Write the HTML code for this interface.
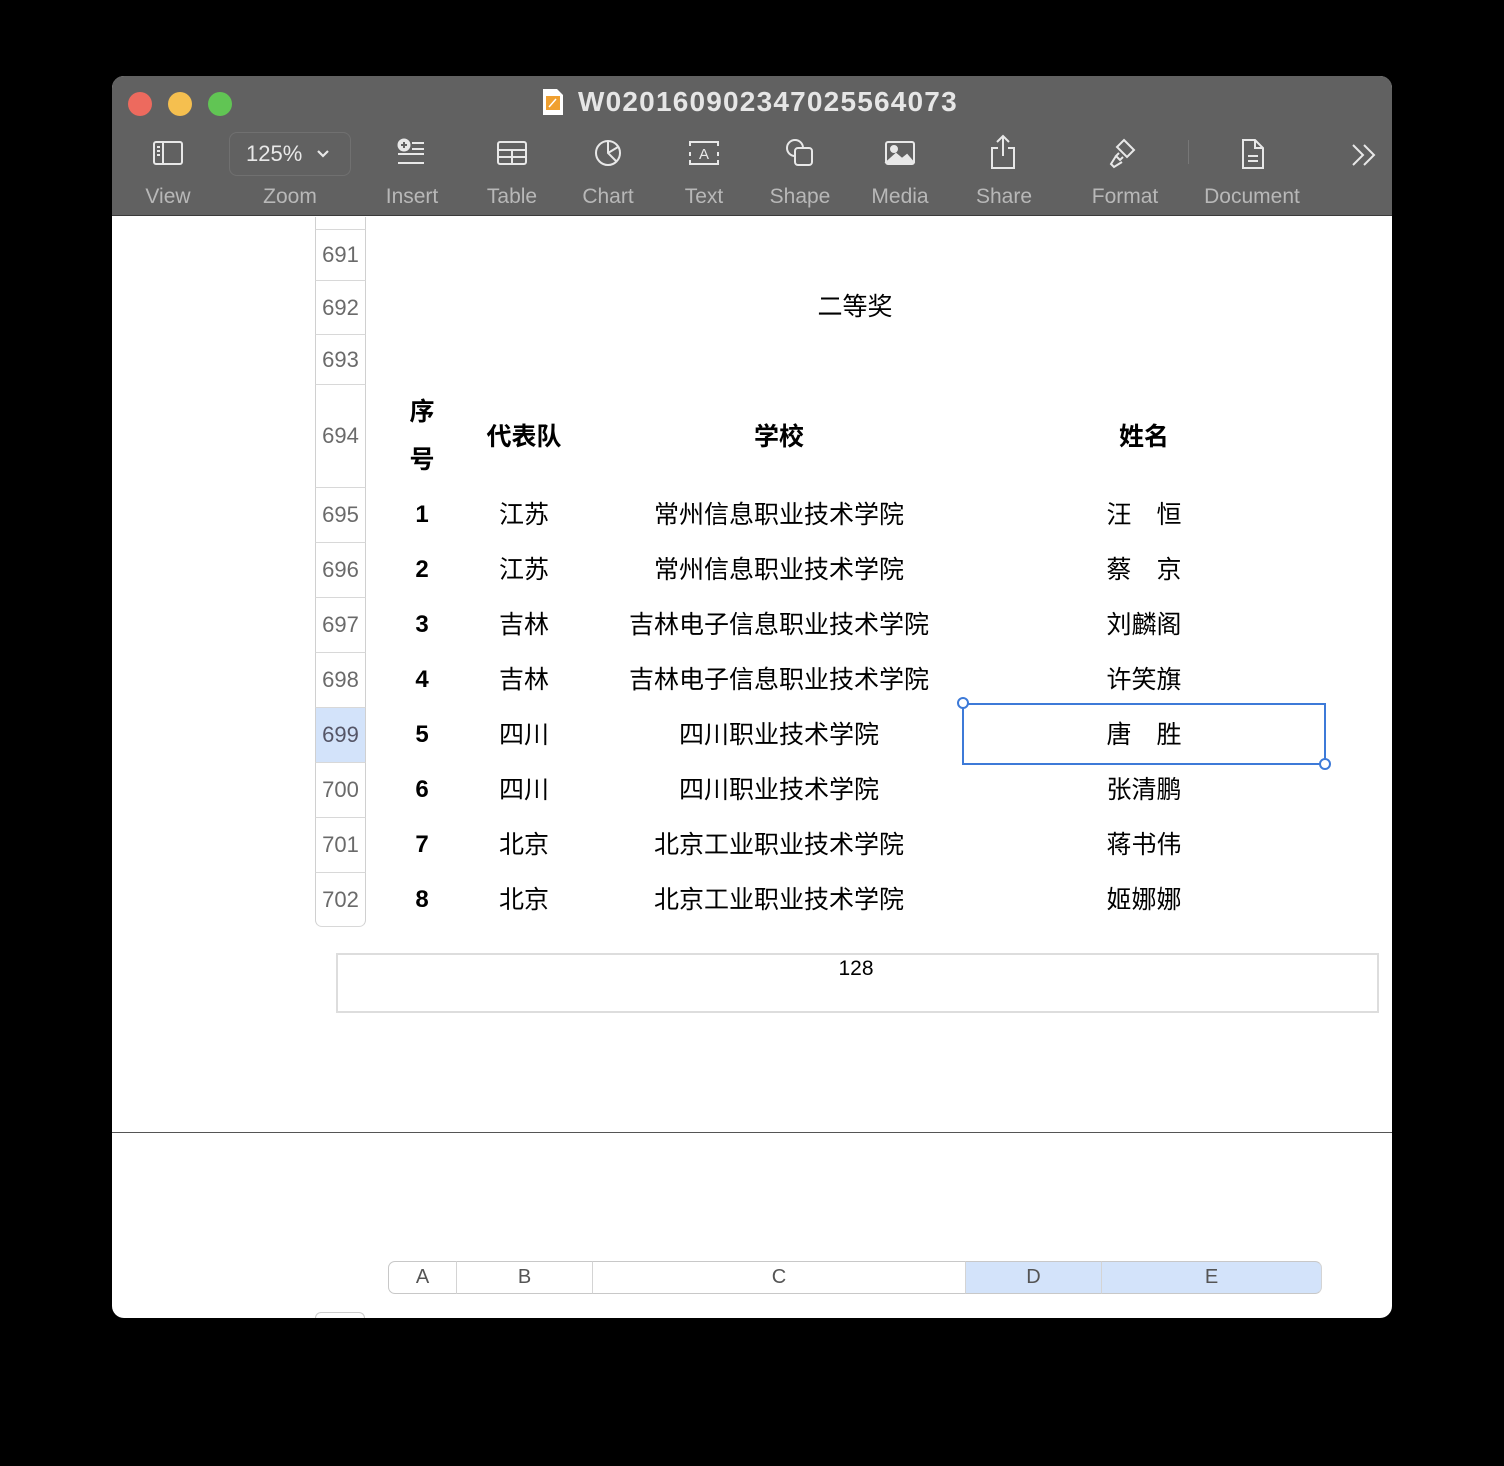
<!DOCTYPE html>
<html><head><meta charset="utf-8"><style>
*{margin:0;padding:0;box-sizing:border-box}
body{width:1504px;height:1466px;background:#000;position:relative;overflow:hidden;font-family:"Liberation Sans","Noto Sans CJK SC",sans-serif}
.win{position:absolute;left:112px;top:76px;width:1280px;height:1242px;background:#fff;border-radius:12px;overflow:hidden}
.tb{position:absolute;left:0;top:0;width:1280px;height:140px;background:#616161;border-bottom:1px solid #3a3a3a}
.dot{position:absolute;top:16px;width:24px;height:24px;border-radius:50%}
.title{position:absolute;left:466px;top:10px;font-size:28px;font-weight:bold;color:#e6e6e6;letter-spacing:1.2px}
.lbl{position:absolute;top:109px;font-size:21px;color:#b8b8b8;transform:translateX(-50%);white-space:nowrap}
.ic{position:absolute;top:62px}
.abs{position:absolute}
.rh{position:absolute;left:315px;width:51px;border-left:1px solid #d0d0d0;border-right:1px solid #d0d0d0;border-bottom:1px solid #d8d8d8;color:#6a6a6a;font-size:22px;display:flex;align-items:center;justify-content:center}
.c{position:absolute;transform:translate(-50%,-50%);font-size:25px;color:#000;white-space:nowrap}
.n{font-size:24px}
.b{font-weight:bold}
.ch{position:absolute;top:1261px;height:33px;border-top:1px solid #c8c8c8;border-bottom:1px solid #c8c8c8;border-right:1px solid #d4d4d4;color:#555;font-size:20px;display:flex;align-items:center;justify-content:center}
</style></head><body>
<div class="win">
<div class="tb">
<div class="dot" style="left:16px;background:#ed6a5e"></div>
<div class="dot" style="left:56px;background:#f5bf4f"></div>
<div class="dot" style="left:96px;background:#61c554"></div>
<svg class="abs" style="left:430px;top:12px" width="22" height="28" viewBox="0 0 22 28"><path d="M1 1h14l6 6v20H1z" fill="#fff"/><rect x="4" y="8" width="14" height="14" fill="#f0a030"/><path d="M7 19l7-8" stroke="#fff" stroke-width="1.5"/></svg>
<div class="title">W020160902347025564073</div>
<svg class="ic" style="left:40px" width="32" height="28" viewBox="0 0 32 28" fill="none" stroke="#e8e8e8" stroke-width="2"><rect x="2" y="4" width="28" height="22" rx="2"/><path d="M11 4v22M5 9h3M5 13h3M5 17h3"/></svg>
<div class="abs" style="left:117px;top:56px;width:122px;height:44px;border:1px solid #707070;border-radius:8px;color:#e8e8e8;font-size:22px;display:flex;align-items:center;padding-left:16px">125%<svg style="margin-left:14px" width="14" height="10" viewBox="0 0 14 10"><path d="M2 2l5 5 5-5" stroke="#e8e8e8" stroke-width="2.2" fill="none"/></svg></div>
<svg class="ic" style="left:284px" width="30" height="30" viewBox="0 0 30 30" fill="none" stroke="#e8e8e8" stroke-width="2"><circle cx="8" cy="7" r="5.5" fill="#e8e8e8"/><path d="M5 7h6M8 4v6" stroke="#616161"/><path d="M16 5h12M16 11h12M2 16h26M2 25h26"/></svg>
<svg class="ic" style="left:384px" width="32" height="28" viewBox="0 0 32 28" fill="none" stroke="#e8e8e8" stroke-width="2"><rect x="2" y="4" width="28" height="22" rx="2"/><path d="M2 12h28M2 19h28M16 12v14"/></svg>
<svg class="ic" style="left:481px" width="30" height="30" viewBox="0 0 30 30" fill="none" stroke="#e8e8e8" stroke-width="2"><circle cx="15" cy="15" r="12"/><path d="M15 3v12l8 8M15 15l10-6"/></svg>
<svg class="ic" style="left:576px" width="32" height="28" viewBox="0 0 32 28" fill="none" stroke="#e8e8e8" stroke-width="2"><path d="M2 8V4h28v4M2 14v4M30 14v4M2 22v4h28v-4"/><text x="16" y="21" font-size="15" fill="#e8e8e8" stroke="none" text-anchor="middle" font-family="Liberation Sans">A</text></svg>
<svg class="ic" style="left:672px" width="32" height="32" viewBox="0 0 32 32" fill="none" stroke="#e8e8e8" stroke-width="2"><circle cx="11" cy="10" r="8"/><rect x="11" y="10" width="17" height="17" rx="3" fill="#616161"/></svg>
<svg class="ic" style="left:772px" width="32" height="28" viewBox="0 0 32 28" fill="none" stroke="#e8e8e8" stroke-width="2"><rect x="2" y="4" width="28" height="22" rx="2"/><circle cx="10" cy="11" r="3" fill="#e8e8e8"/><path d="M3 24l9-8 6 5 5-4 6 7z" fill="#e8e8e8"/></svg>
<svg class="ic" style="left:876px;top:58px" width="30" height="36" viewBox="0 0 30 36" fill="none" stroke="#e8e8e8" stroke-width="2"><path d="M15 2v20M9 8l6-6 6 6M10 14H4v20h22V14h-6"/></svg>
<svg class="ic" style="left:996px;top:60px" width="32" height="34" viewBox="0 0 32 34" fill="none" stroke="#e8e8e8" stroke-width="2"><path d="M16 4l10 10-7 7-10-10zM11 17l-3 3 4 4 3-3M8 20l-5 8 3 3 8-5"/></svg>
<div class="abs" style="left:1076px;top:64px;width:1px;height:24px;background:#777"></div>
<svg class="ic" style="left:1128px" width="26" height="32" viewBox="0 0 26 32" fill="none" stroke="#e8e8e8" stroke-width="2"><path d="M3 2h12l8 8v20H3zM15 2v8h8M8 18h10M8 23h10"/></svg>
<svg class="ic" style="left:1238px;top:67px" width="28" height="24" viewBox="0 0 28 24" fill="none" stroke="#e8e8e8" stroke-width="2"><path d="M3 2l10 10L3 22M14 2l10 10-10 10"/></svg>
<div class="lbl" style="left:56px">View</div>
<div class="lbl" style="left:178px">Zoom</div>
<div class="lbl" style="left:300px">Insert</div>
<div class="lbl" style="left:400px">Table</div>
<div class="lbl" style="left:496px">Chart</div>
<div class="lbl" style="left:592px">Text</div>
<div class="lbl" style="left:688px">Shape</div>
<div class="lbl" style="left:788px">Media</div>
<div class="lbl" style="left:892px">Share</div>
<div class="lbl" style="left:1013px">Format</div>
<div class="lbl" style="left:1140px">Document</div>
</div>
<div class="abs" style="left:0;top:1056px;width:1280px;height:1px;background:#555"></div>
</div>

<div class="rh" style="top:217px;height:13px"></div>
<div class="rh" style="top:230px;height:51px">691</div>
<div class="rh" style="top:281px;height:54px">692</div>
<div class="rh" style="top:335px;height:50px">693</div>
<div class="rh" style="top:385px;height:103px">694</div>
<div class="rh" style="top:488px;height:55px">695</div>
<div class="rh" style="top:543px;height:55px">696</div>
<div class="rh" style="top:598px;height:55px">697</div>
<div class="rh" style="top:653px;height:55px">698</div>
<div class="rh" style="top:708px;height:55px;background:#d3e3fa;color:#556">699</div>
<div class="rh" style="top:763px;height:55px">700</div>
<div class="rh" style="top:818px;height:55px">701</div>
<div class="rh" style="top:873px;height:54px;border-radius:0 0 7px 7px">702</div>

<div class="c" style="left:855px;top:305px">二等奖</div>
<div class="c b" style="left:422px;top:410px">序</div>
<div class="c b" style="left:422px;top:458px">号</div>
<div class="c b" style="left:524px;top:435px">代表队</div>
<div class="c b" style="left:779px;top:435px">学校</div>
<div class="c b" style="left:1144px;top:435px">姓名</div>

<div class="c b n" style="left:422px;top:515px">1</div><div class="c" style="left:524px;top:513px">江苏</div><div class="c" style="left:779px;top:513px">常州信息职业技术学院</div><div class="c" style="left:1144px;top:513px">汪　恒</div>
<div class="c b n" style="left:422px;top:570px">2</div><div class="c" style="left:524px;top:568px">江苏</div><div class="c" style="left:779px;top:568px">常州信息职业技术学院</div><div class="c" style="left:1144px;top:568px">蔡　京</div>
<div class="c b n" style="left:422px;top:625px">3</div><div class="c" style="left:524px;top:623px">吉林</div><div class="c" style="left:779px;top:623px">吉林电子信息职业技术学院</div><div class="c" style="left:1144px;top:623px">刘麟阁</div>
<div class="c b n" style="left:422px;top:680px">4</div><div class="c" style="left:524px;top:678px">吉林</div><div class="c" style="left:779px;top:678px">吉林电子信息职业技术学院</div><div class="c" style="left:1144px;top:678px">许笑旗</div>
<div class="c b n" style="left:422px;top:735px">5</div><div class="c" style="left:524px;top:733px">四川</div><div class="c" style="left:779px;top:733px">四川职业技术学院</div><div class="c" style="left:1144px;top:733px">唐　胜</div>
<div class="c b n" style="left:422px;top:790px">6</div><div class="c" style="left:524px;top:788px">四川</div><div class="c" style="left:779px;top:788px">四川职业技术学院</div><div class="c" style="left:1144px;top:788px">张清鹏</div>
<div class="c b n" style="left:422px;top:845px">7</div><div class="c" style="left:524px;top:843px">北京</div><div class="c" style="left:779px;top:843px">北京工业职业技术学院</div><div class="c" style="left:1144px;top:843px">蒋书伟</div>
<div class="c b n" style="left:422px;top:900px">8</div><div class="c" style="left:524px;top:898px">北京</div><div class="c" style="left:779px;top:898px">北京工业职业技术学院</div><div class="c" style="left:1144px;top:898px">姬娜娜</div>

<div class="abs" style="left:962px;top:703px;width:364px;height:62px;border:2px solid #3d7ad8"></div>
<div class="abs" style="left:957px;top:697px;width:12px;height:12px;border:2px solid #3d7ad8;border-radius:50%;background:#fff"></div>
<div class="abs" style="left:1319px;top:758px;width:12px;height:12px;border:2px solid #3d7ad8;border-radius:50%;background:#fff"></div>

<div class="abs" style="left:336px;top:953px;width:1043px;height:60px;border:2px solid #ddd"></div>
<div class="c" style="left:856px;top:969px;font-size:21px">128</div>

<div class="ch" style="left:388px;width:69px;border-left:1px solid #c8c8c8;border-radius:7px 0 0 7px">A</div>
<div class="ch" style="left:457px;width:136px">B</div>
<div class="ch" style="left:593px;width:373px">C</div>
<div class="ch" style="left:966px;width:136px;background:#d3e3fa">D</div>
<div class="ch" style="left:1102px;width:220px;background:#d3e3fa;border-radius:0 7px 7px 0">E</div>
<div class="abs" style="left:315px;top:1312px;width:50px;height:6px;border:1px solid #ccc;border-bottom:none;border-radius:6px 6px 0 0"></div>
</body></html>
